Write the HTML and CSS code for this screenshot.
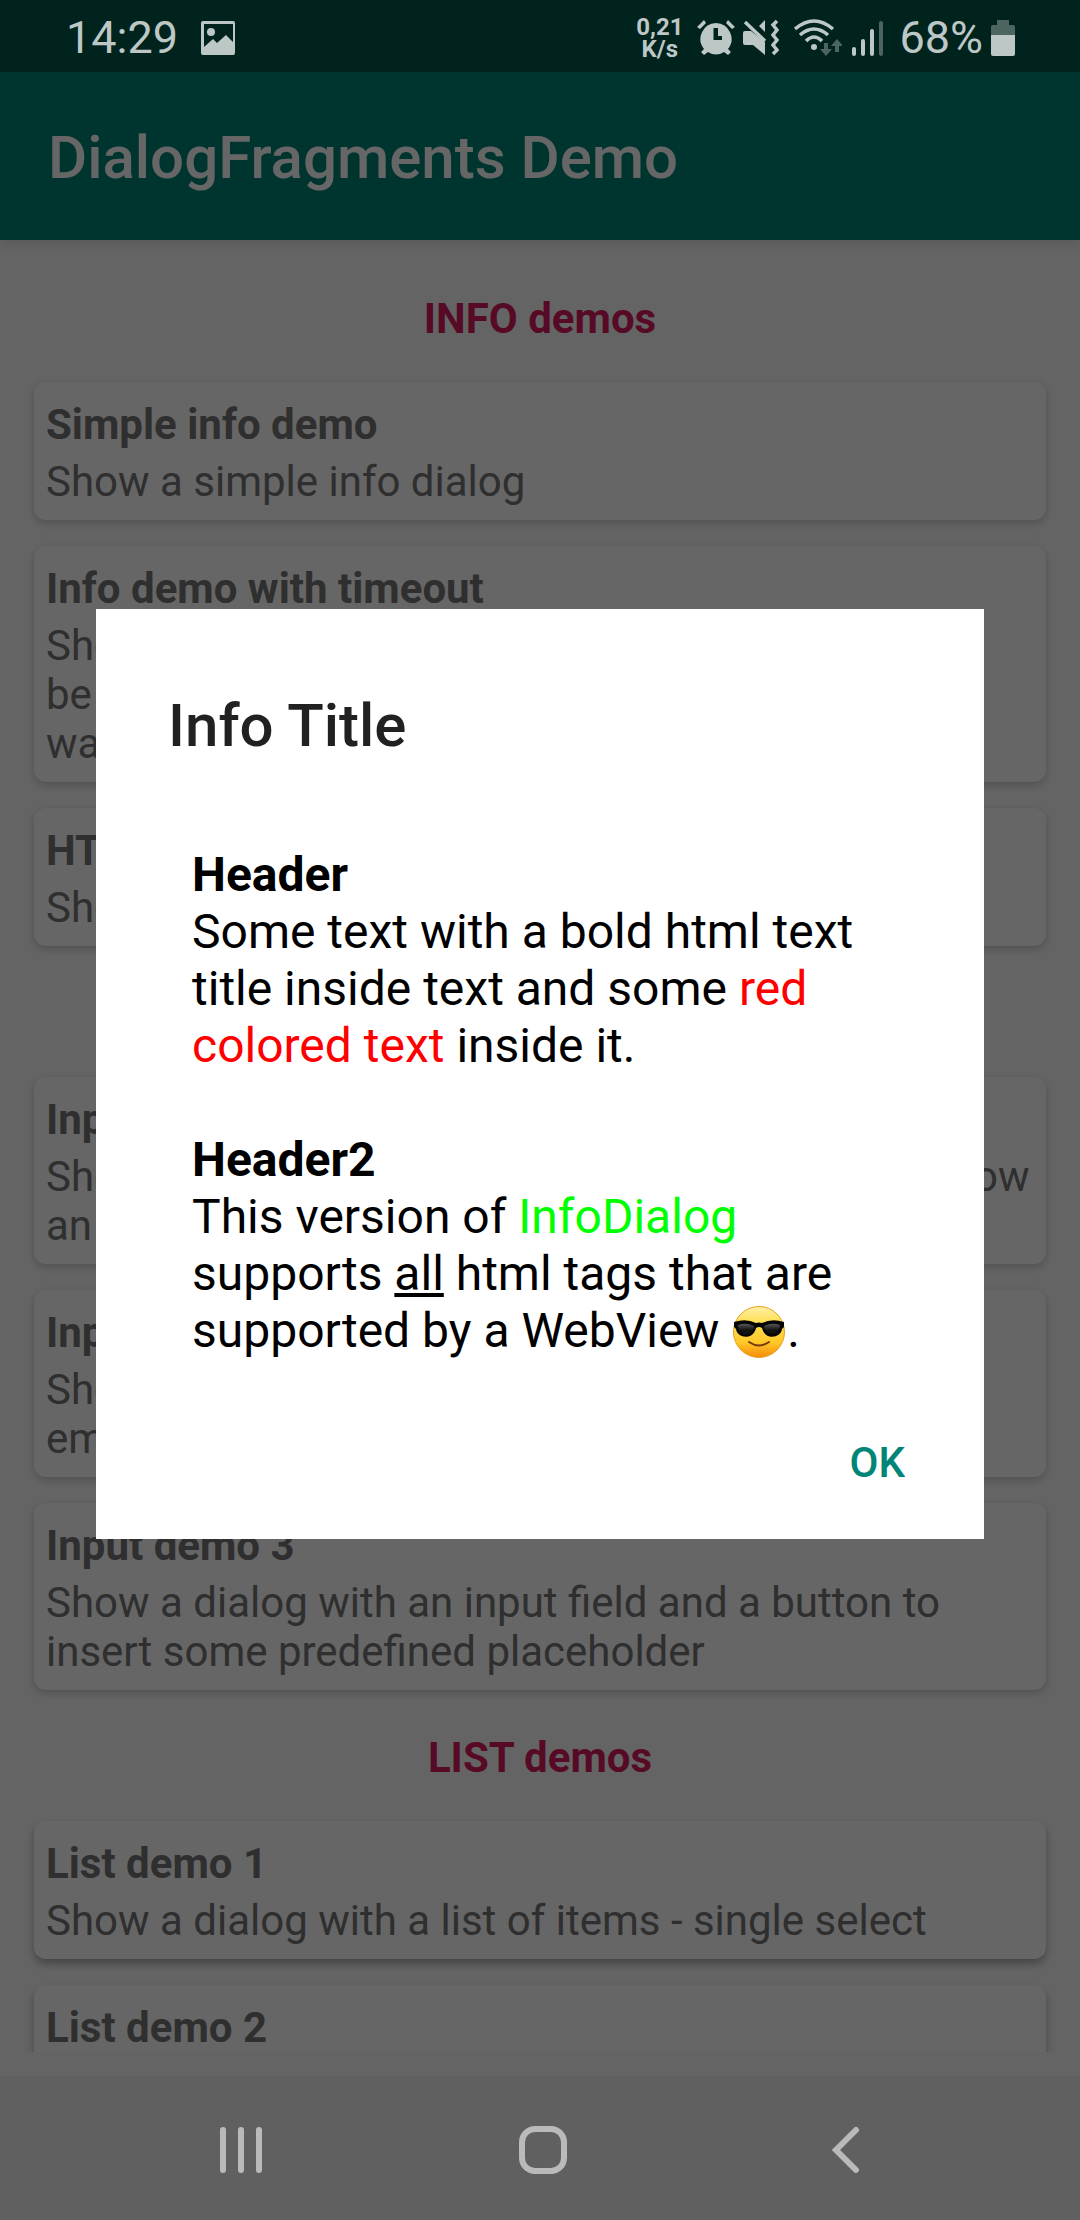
FILE: index.html
```html
<!DOCTYPE html>
<html lang="en">
<head>
<meta charset="utf-8">
<meta name="viewport" content="width=device-width, initial-scale=1">
<title>DialogFragments Demo</title>
<link rel="stylesheet" href="styles.css">
</head>
<body>
<div class="status">
  <div class="status-side">
    <span class="clock">14:29</span>
    <svg class="picture" width="36" height="36" viewBox="0 0 36 36" aria-hidden="true">
      <path fill-rule="evenodd" d="M3 1h30a2 2 0 0 1 2 2v30a2 2 0 0 1-2 2H3a2 2 0 0 1-2-2V3a2 2 0 0 1 2-2zM4 4v23l9-8 4 4 9-8 7 7V4z"/>
      <circle cx="11" cy="12" r="4"/>
    </svg>
  </div>
  <div class="status-side">
    <span class="speed">0,21<br>K/s</span>
    <svg class="alarm" width="38" height="38" viewBox="0 0 38 38" aria-hidden="true">
      <path fill-rule="evenodd" d="M19 4a16 16 0 0 1 12 26l3 3-3 3-4-3a15 15 0 0 1-16 0l-4 3-3-3 3-3A16 16 0 0 1 19 4zM16.500 9v12H25v-4h-4V9z"/>
      <path d="M0 8l7-7 2 3-6 6zM38 8l-7-7-2 3 6 6z"/>
    </svg>
    <svg class="mute" width="36" height="38" viewBox="0 0 36 38" aria-hidden="true">
      <path d="M2 12h6L22 23v13L10 26H2a2 2 0 0 1-2-2V14a2 2 0 0 1 2-2zM16 7l6-6v12z"/>
      <path class="line" stroke-width="3.500" d="M2 3l20 19M34 2l-4 4 4 5-4 5 4 5-4 5 4 5-4 4"/>
    </svg>
    <svg class="wifi" width="48" height="38" viewBox="0 0 48 38" aria-hidden="true">
      <path class="line" stroke-width="3.500" d="M1 10q19-16 38 0M6 16q14-12 28 0M12 22q8-8 16 0"/>
      <circle cx="20" cy="28" r="3"/>
      <path class="dim" d="M30 24h4v6h4l-6 7-6-7h4zM41 33h4v-6h4l-6-7-6 7h4z"/>
    </svg>
    <svg class="signal" width="32" height="38" viewBox="0 0 32 38" aria-hidden="true">
      <path d="M0 30a2 2 0 0 1 4 0v5a2 2 0 0 1-4 0zM9 22a2 2 0 0 1 4 0v13a2 2 0 0 1-4 0zM18 12a2 2 0 0 1 4 0v23a2 2 0 0 1-4 0z"/>
      <path class="dim" d="M27 4a2 2 0 0 1 4 0v31a2 2 0 0 1-4 0z"/>
    </svg>
    <span class="charge">68%</span>
    <svg class="battery" width="24" height="38" viewBox="0 0 24 38" aria-hidden="true">
      <path class="dim" d="M6 1h12v5h4a2 2 0 0 1 2 2v8H0V8a2 2 0 0 1 2-2h4z"/>
      <path d="M0 16h24v19a2 2 0 0 1-2 2H2a2 2 0 0 1-2-2z"/>
    </svg>
  </div>
</div>

<header class="appbar"><h1>DialogFragments Demo</h1></header>

<main class="content">
  <section class="group">
    <h2>INFO demos</h2>
    <button class="card"><b>Simple info demo</b><span>Show a simple info dialog</span></button>
    <button class="card"><b>Info demo with timeout</b><span>Show a simple info dialog that can only<br>be closed after a timeout, the button<br>waits for the timer</span></button>
    <button class="card"><b>HTML info demo</b><span>Show an info dialog with html text</span></button>
  </section>
  <section class="group">
    <h2>INPUT demos</h2>
    <button class="card"><b>Input demo 1</b><span>Show a dialog with an input field and does also show<br>an input hint</span></button>
    <button class="card"><b>Input demo 2</b><span>Show a dialog with an input field that forbids<br>empty input</span></button>
    <button class="card"><b>Input demo 3</b><span>Show a dialog with an input field and a button to<br>insert some predefined placeholder</span></button>
  </section>
  <section class="group">
    <h2>LIST demos</h2>
    <button class="card"><b>List demo 1</b><span>Show a dialog with a list of items - single select</span></button>
    <button class="card"><b>List demo 2</b></button>
  </section>
</main>

<div class="scrim">
  <div class="dialog" role="dialog" aria-modal="true" aria-labelledby="dialog-title">
    <h2 id="dialog-title">Info Title</h2>
    <div class="dialog-body">
      <b>Header</b><br>
      Some text with a bold html text title inside text and some <span class="red">red colored text</span> inside it.<br>
      <br>
      <b>Header2</b><br>
      This version of <span class="green">InfoDialog</span> supports <u>all</u> html tags that are supported by a WebView
      <svg class="emoji" width="56" height="54" viewBox="0 0 56 54" role="img" aria-label="smiling face with sunglasses">
        <defs>
          <linearGradient id="skin" x1="0" y1="0" x2="0" y2="1">
            <stop offset="0" stop-color="#fff0a8"/><stop offset=".3" stop-color="#ffdf55"/><stop offset=".7" stop-color="#ffc928"/><stop offset="1" stop-color="#f58a0c"/>
          </linearGradient>
          <linearGradient id="lens" x1="0" y1="0" x2="0" y2="1">
            <stop offset="0" stop-color="#555"/><stop offset=".6" stop-color="#111"/>
          </linearGradient>
        </defs>
        <circle cx="28" cy="27" r="25.500" fill="url(#skin)" stroke="#e8a020"/>
        <path d="M3 17q12-4 22 1 3-1 6 0 10-5 22-1v5l-2 2c-1 9-17 12-20-1q-3-2-6 0c-3 13-19 10-20 1l-2-2z" fill="#050505"/>
        <path d="M7 20q8-3 16 1c-1 12-15 11-16 0zM33 21q8-4 16-1c-1 11-15 12-16 1z" fill="url(#lens)"/>
        <path d="M18 37q10 7 20 0" fill="none" stroke="#7a3a08" stroke-width="2" stroke-linecap="round"/>
      </svg>.
    </div>
    <div class="actions"><button class="ok">OK</button></div>
  </div>
</div>

<nav class="navbar">
  <button aria-label="Recent apps"><svg width="48" height="48" viewBox="0 0 48 48"><path d="M6 4v40M24 4v40M42 4v40"/></svg></button>
  <button aria-label="Home"><svg width="48" height="48" viewBox="0 0 48 48"><rect x="3" y="3" width="42" height="42" rx="13"/></svg></button>
  <button aria-label="Back"><svg width="48" height="48" viewBox="0 0 48 48"><path d="M35 4L15 24l20 20"/></svg></button>
</nav>
</body>
</html>
```

FILE: styles.css
```css
* {
  box-sizing: border-box;
}

body {
  margin: 0;
  height: 100vh;
  display: flex;
  flex-direction: column;
  overflow: hidden;
  background: #fafafa;
  font-family: Roboto, "Noto Sans", sans-serif;
  font-size: 42px;
  line-height: 49px;
}

h1,
h2 {
  margin: 0;
}

button {
  border: 0;
  padding: 0;
  background: none;
  font: inherit;
}

/* System status bar, drawn above the scrim */
.status {
  position: relative;
  z-index: 2;
  flex: none;
  height: 72px;
  padding: 3px 65px 0 66px;
  display: flex;
  align-items: center;
  justify-content: space-between;
  background: #00231e;
  color: #bdc8c6;
  font-size: 45px;
}

.status-side {
  display: flex;
  align-items: center;
}

.status svg {
  fill: #bdc8c6;
}

.status .dim {
  fill: #4d6561;
}

.status .line {
  fill: none;
  stroke: #bdc8c6;
}

.picture {
  margin-left: 22px;
}

.speed {
  font-size: 24px;
  line-height: 22px;
  font-weight: 700;
  text-align: center;
}

.alarm {
  margin-left: 14px;
}

.mute {
  margin-left: 8px;
}

.wifi {
  margin-left: 15px;
}

.signal {
  margin-left: 10px;
}

.charge {
  margin-left: 15px;
}

.battery {
  margin-left: 8px;
}

.appbar {
  position: relative;
  flex: none;
  height: 168px;
  padding: 2px 48px 0;
  display: flex;
  align-items: center;
  background: #008577;
  color: #fff;
  box-shadow: 0 4px 12px rgba(0, 0, 0, 0.12);
}

.appbar h1 {
  font-size: 60px;
  line-height: 71px;
  font-weight: 500;
}

.content {
  flex: 1;
  min-height: 0;
  margin-bottom: 24px;
  padding: 11px 34px 0;
  overflow: hidden;
}

.group {
  display: flex;
  flex-direction: column;
  gap: 26px;
}

.group h2 {
  margin: 43px 0 13px;
  font-size: 42px;
  line-height: 49px;
  text-align: center;
  color: #d81b60;
}

.card {
  padding: 18px 12px 14px;
  display: flex;
  flex-direction: column;
  gap: 8px;
  border-radius: 12px;
  background: #fff;
  color: #757575;
  text-align: left;
  box-shadow: 0 3px 8px rgba(0, 0, 0, 0.2);
}

.group:last-child .card {
  box-shadow: 0 5px 8px rgba(0, 0, 0, 0.3);
}

/* The last card runs on below the fold */
.group:last-child .card:last-child {
  padding-bottom: 71px;
}

.scrim {
  position: fixed;
  inset: 0;
  z-index: 1;
  padding: 72px 96px 144px;
  display: flex;
  align-items: center;
  background: rgba(0, 0, 0, 0.6);
}

.dialog {
  flex: 1;
  padding: 81px 72px 52px;
  background: #fff;
}

.dialog h2 {
  font-size: 60px;
  line-height: 71px;
  font-weight: 500;
  color: #212121;
}

.dialog-body {
  margin: 85px 24px 79px;
  font-size: 48px;
  line-height: 57px;
  color: #000;
}

.red {
  color: #f00;
}

.green {
  color: #0f0;
}

.emoji {
  margin: -10px 0;
  vertical-align: -2px;
}

.actions {
  display: flex;
  justify-content: flex-end;
  padding-right: 7px;
}

.ok {
  color: #008577;
  font-weight: 500;
}

.navbar {
  position: relative;
  z-index: 2;
  flex: none;
  height: 144px;
  padding: 4px 84px 0 90px;
  display: flex;
  background: #606060;
}

.navbar button {
  flex: 1;
  display: flex;
  align-items: center;
  justify-content: center;
}

.navbar svg {
  fill: none;
  stroke: #bababa;
  stroke-width: 6;
  stroke-linecap: round;
}
```
